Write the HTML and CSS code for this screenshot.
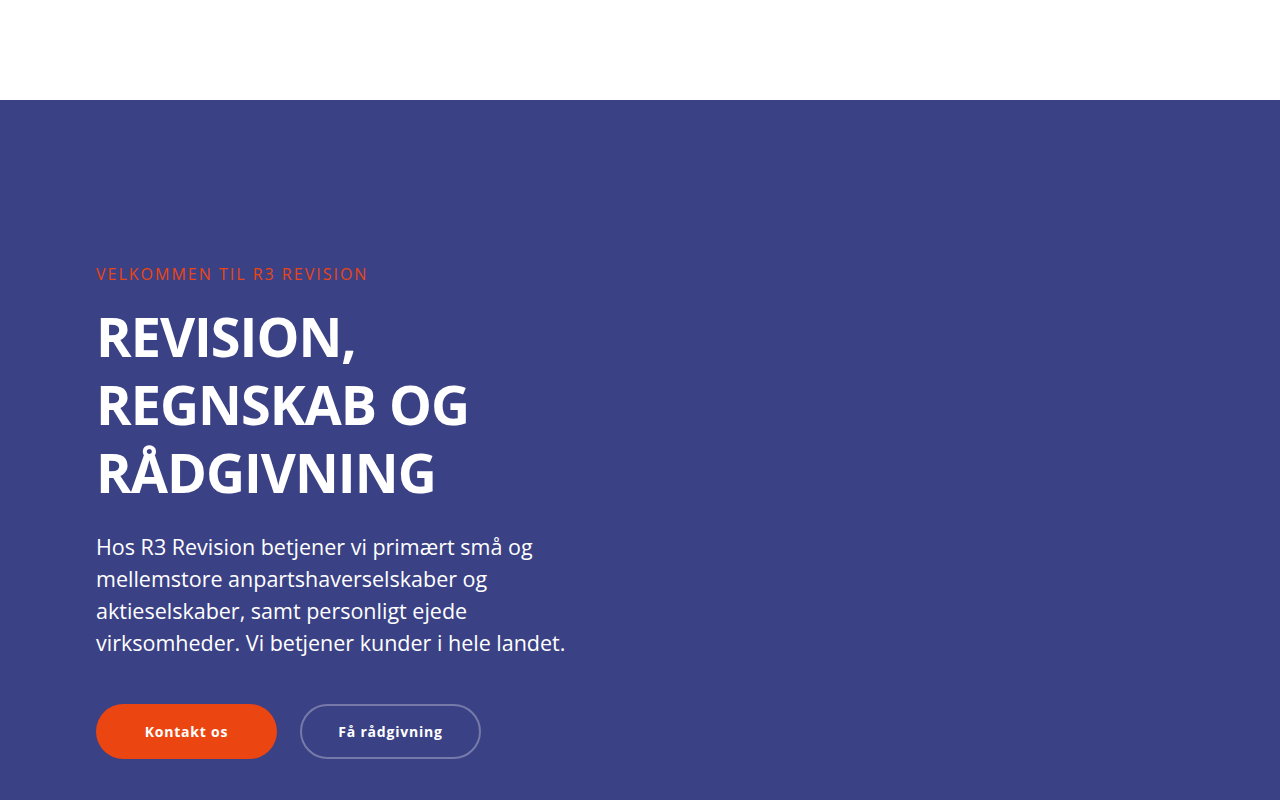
FILE: index.html
```html
<!DOCTYPE html>
<html lang="da">
<head>
<meta charset="utf-8">
<title>R3 Revision</title>
<link rel="stylesheet" href="styles.css">
</head>
<body>
<header class="topbar"></header>
<section class="hero">
  <div class="hero-inner">
    <div class="hero-text">
      <p class="eyebrow">VELKOMMEN TIL R3 REVISION</p>
      <h1 class="title">REVISION, REGNSKAB OG RÅDGIVNING</h1>
      <p class="lead">Hos R3 Revision betjener vi primært små og mellemstore anpartshaverselskaber og aktieselskaber, samt personligt ejede virksomheder. Vi betjener kunder i hele landet.</p>
      <div class="actions">
        <a class="btn btn-primary" href="#">Kontakt os</a>
        <a class="btn btn-outline" href="#">Få rådgivning</a>
      </div>
    </div>
  </div>
</section>
</body>
</html>
```

FILE: styles.css
```css
* { box-sizing: border-box; }
html, body { margin: 0; padding: 0; }
body {
  font-family: "Open Sans", "Noto Sans", sans-serif;
  background: #3b4185;
  overflow: hidden;
}
.topbar {
  height: 100px;
  background: #ffffff;
}
.hero {
  background: #3b4185;
  min-height: 700px;
}
.hero-inner {
  padding: 162px 96px 0;
}
.hero-text {
  width: 490px;
}
.eyebrow {
  margin: 0;
  color: #eb4511;
  font-size: 16px;
  line-height: 24px;
  letter-spacing: 2px;
  font-weight: 400;
}
.title {
  margin: 16px 0 0;
  color: #ffffff;
  font-size: 54px;
  line-height: 68px;
  font-weight: 700;
  letter-spacing: -1px;
}
.lead {
  margin: 25px 0 0;
  color: #ffffff;
  font-size: 21.5px;
  line-height: 32px;
  width: 490px;
}
.actions {
  display: flex;
  gap: 23px;
  margin-top: 45px;
}
.btn {
  display: flex;
  align-items: center;
  justify-content: center;
  width: 181px;
  height: 55px;
  border-radius: 28px;
  font-size: 14px;
  font-weight: 700;
  letter-spacing: 0.8px;
  color: #ffffff;
  text-decoration: none;
}
.btn-primary {
  background: #eb4511;
}
.btn-outline {
  border: 2px solid rgba(255, 255, 255, 0.3);
}
```
